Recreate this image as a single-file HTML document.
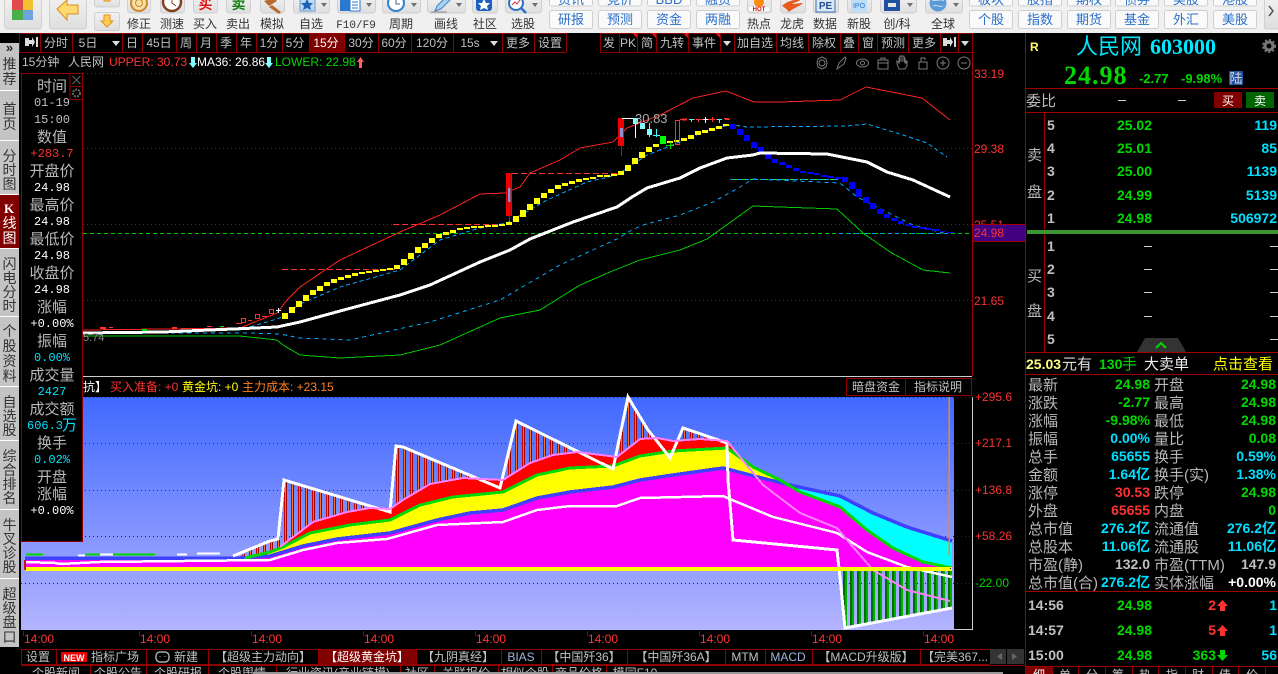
<!DOCTYPE html>
<html><head><meta charset="utf-8"><title>人民网 603000</title>
<style>
html,body{margin:0;padding:0;background:#000;width:1278px;height:674px;overflow:hidden}
svg{display:block}
text{font-family:"Liberation Sans","Noto Sans CJK SC",sans-serif;font-size:12px;fill:#c0c0c0}
.m text,text.m{font-family:"Liberation Mono","Noto Sans CJK SC",monospace}
.l text{font-size:15px;fill:#b8b8b8}
.b text,text.b{font-weight:bold;font-size:14px}
.e{text-anchor:end}.c{text-anchor:middle}
.k{fill:#333}.bl text{fill:#2a6fc8;font-size:13px;text-anchor:middle}
.tab text{text-anchor:middle}
.gr{fill:#00d800}.cy{fill:#00e0ff}.rd{fill:#ff3232}.wh{fill:#fff}.ye{fill:#ff0}
.ln{fill:none;shape-rendering:crispEdges}
</style></head><body>
<svg xmlns="http://www.w3.org/2000/svg" width="1278" height="674" viewBox="0 0 1278 674">
<defs>
<linearGradient id="bg" x1="0" y1="0" x2="0" y2="1"><stop offset="0" stop-color="#4069ff"/><stop offset="1" stop-color="#b4b4ff"/></linearGradient>
<linearGradient id="btn" x1="0" y1="0" x2="0" y2="1"><stop offset="0" stop-color="#f2f2f2"/><stop offset="1" stop-color="#dedede"/></linearGradient>
<pattern id="sr" width="7" height="10" patternUnits="userSpaceOnUse" x="0"><rect x="4" width="1" height="10" fill="#d00000"/><rect x="5" width="1" height="10" fill="#ff7020"/><rect x="6" width="1" height="10" fill="#a00000"/></pattern>
<pattern id="sg" width="7" height="10" patternUnits="userSpaceOnUse" x="3"><rect x="0" width="2" height="10" fill="#007000"/><rect x="2" width="2" height="10" fill="#00b000"/></pattern>
</defs>
<!-- toolbar -->
<rect width="1278" height="33" fill="#f0f0f0"/>
<g fill="url(#btn)" stroke="#d0d0d0">
<rect x="4.500" y="-5" width="37" height="34" rx="3"/><rect x="49.500" y="-5" width="37" height="34" rx="3"/>
<rect x="94.500" y="-5" width="25" height="12" rx="2"/><rect x="94.500" y="12.500" width="25" height="18" rx="2"/>
<rect x="127.500" y="-5" width="23" height="18" rx="3"/><rect x="160.500" y="-5" width="24" height="18" rx="3"/><rect x="193.500" y="-5" width="24" height="18" rx="3"/><rect x="226.500" y="-5" width="24" height="18" rx="3"/><rect x="260.500" y="-5" width="24" height="18" rx="3"/>
<rect x="293.500" y="-5" width="36" height="18" rx="3"/><rect x="337.500" y="-5" width="38" height="18" rx="3"/><rect x="382.500" y="-5" width="38" height="18" rx="3"/><rect x="427.500" y="-5" width="38" height="18" rx="3"/><rect x="472.500" y="-5" width="25" height="18" rx="3"/><rect x="505.500" y="-5" width="36" height="18" rx="3"/>
<rect x="747.500" y="-5" width="24" height="18" rx="3"/><rect x="780.500" y="-5" width="25" height="18" rx="3"/><rect x="813.500" y="-5" width="25" height="18" rx="3"/><rect x="847.500" y="-5" width="24" height="18" rx="3"/><rect x="880.500" y="-5" width="36" height="18" rx="3"/><rect x="925.500" y="-5" width="37" height="18" rx="3"/>
<rect x="1264.500" y="-5" width="20" height="34" rx="2"/>
</g>
<g fill="#707070"><path d="M321 3h6l-3 4zM366 3h6l-3 4zM411 3h6l-3 4zM456 3h6l-3 4zM532 3h6l-3 4zM907 3h6l-3 4zM953 3h6l-3 4z"/></g>
<path d="M1269 6l4 5-4 5" fill="none" stroke="#555" stroke-width="1.500"/>
<!-- logo -->
<rect x="12" y="-1" width="11" height="11" fill="#e04a4a"/><rect x="23" y="-1" width="10" height="11" fill="#f2c230"/><rect x="12" y="10" width="11" height="10" fill="#48b048"/><rect x="23" y="10" width="10" height="10" fill="#6ea4e0"/>
<path d="M57 9l10-9v5h11v9h-11v6z" fill="#ffd870" stroke="#d89020"/>
<path d="M104 -2h6v3h-6z" fill="#ffd050" stroke="#e09020"/>
<path d="M104 15h6v6h3l-6 6-6-6h3z" fill="#ffd050" stroke="#e09020"/>
<circle cx="139" cy="3" r="8" fill="#f8e0a0" stroke="#c88830" stroke-width="2"/><circle cx="139" cy="3" r="3.500" fill="none" stroke="#c88830"/>
<circle cx="172" cy="2" r="9" fill="#fff" stroke="#804020" stroke-width="2.500"/><path d="M172 -2v5l4 3" fill="none" stroke="#804020"/>
<text x="205.500" y="9" class="c" style="fill:#e01010;font-size:14px;font-weight:bold">买</text>
<text x="238.500" y="9" class="c" style="fill:#108010;font-size:14px;font-weight:bold">卖</text>
<path d="M264 1l10-3 3 3-8 5zM272 5l9 7-2 2-10-7z" fill="#b86a30"/>
<rect x="300" y="-3" width="15" height="14" fill="#bcd8f4" stroke="#6a9ad0"/><path d="M307 -1l2 4h4l-3 3 1 4-4-2-4 2 1-4-3-3h4z" fill="#2060b0"/>
<rect x="340" y="-1" width="10" height="12" fill="#2a78d0"/><rect x="350" y="-1" width="10" height="12" fill="#fff" stroke="#2a78d0"/><path d="M352 2h6M352 5h6M352 8h6" stroke="#2a78d0"/>
<circle cx="396" cy="3" r="8" fill="#fff" stroke="#3080d0" stroke-width="2"/><path d="M396 -1v5h4" fill="none" stroke="#406080"/>
<path d="M435 11l2-5 9-9 4 3-9 9z" fill="#a8d0f0" stroke="#3a80c0"/><path d="M431 12h16" stroke="#888"/>
<rect x="476" y="-3" width="16" height="14" rx="3" fill="#2060c0"/><path d="M484 -1l2 4h4l-3 3 1 4-4-2-4 2 1-4-3-3h4z" fill="#fff"/>
<circle cx="516" cy="3" r="7" fill="#fff" stroke="#2a70c8" stroke-width="2"/><path d="M512 5l3-3 2 2 3-4" fill="none" stroke="#e03030"/><path d="M521 8l5 5" stroke="#2a70c8" stroke-width="2.500"/>
<circle cx="759" cy="2" r="5" fill="#ff8a10"/><rect x="749" y="7" width="20" height="4" fill="#fff"/><text x="759" y="11" class="c" style="font-size:6px;font-weight:bold;fill:#d01010">HOT</text>
<path d="M782 6c6-6 14-6 20-8-2 4-8 4-10 6 4 0 8-1 11-1-4 4-10 5-14 9-2-3-5-5-7-6z" fill="#e85a20"/>
<rect x="816" y="-2" width="19" height="14" fill="#dce8f8" stroke="#406fa8"/><text x="825.500" y="9" class="c" style="font-size:10px;font-weight:bold;fill:#204f90">PE</text>
<rect x="851" y="-2" width="16" height="14" fill="#bcdcf8"/><text x="859" y="8" class="c" style="font-size:7px;fill:#2a78d0">IPO</text>
<path d="M884 -1h16v12h-16zM888 3h8v4h-8z" fill="#2050a0" fill-rule="evenodd"/>
<circle cx="938" cy="3" r="8.500" fill="#5a9ad8"/><path d="M932 0c4 2 8-2 12 1M933 6c4-2 7 2 10 0" fill="none" stroke="#c0dcf4"/>
<g fill="#fafafa" stroke="#cfcfcf">
<rect x="549.500" y="-8" width="43" height="14" rx="2"/><rect x="598.500" y="-8" width="43" height="14" rx="2"/><rect x="647.500" y="-8" width="43" height="14" rx="2"/><rect x="696.500" y="-8" width="43" height="14" rx="2"/>
<rect x="969.500" y="-8" width="43" height="14" rx="2"/><rect x="1018.500" y="-8" width="43" height="14" rx="2"/><rect x="1067.500" y="-8" width="43" height="14" rx="2"/><rect x="1115.500" y="-8" width="43" height="14" rx="2"/><rect x="1164.500" y="-8" width="43" height="14" rx="2"/><rect x="1213.500" y="-8" width="43" height="14" rx="2"/>
<rect x="549.500" y="10.500" width="43" height="18" rx="2"/><rect x="598.500" y="10.500" width="43" height="18" rx="2"/><rect x="647.500" y="10.500" width="43" height="18" rx="2"/><rect x="696.500" y="10.500" width="43" height="18" rx="2"/>
<rect x="969.500" y="10.500" width="43" height="18" rx="2"/><rect x="1018.500" y="10.500" width="43" height="18" rx="2"/><rect x="1067.500" y="10.500" width="43" height="18" rx="2"/><rect x="1115.500" y="10.500" width="43" height="18" rx="2"/><rect x="1164.500" y="10.500" width="43" height="18" rx="2"/><rect x="1213.500" y="10.500" width="43" height="18" rx="2"/>
</g>
<g class="bl">
<text x="571" y="4">资讯</text><text x="620" y="4">竞价</text><text x="669" y="4">BBD</text><text x="718" y="4">融资</text><text x="991" y="4">板块</text><text x="1040" y="4">股指</text><text x="1089" y="4">期权</text><text x="1137" y="4">债券</text><text x="1186" y="4">美股</text><text x="1235" y="4">港股</text>
<text x="571" y="24">研报</text><text x="620" y="24">预测</text><text x="669" y="24">资金</text><text x="718" y="24">两融</text><text x="991" y="24">个股</text><text x="1040" y="24">指数</text><text x="1089" y="24">期货</text><text x="1137" y="24">基金</text><text x="1186" y="24">外汇</text><text x="1235" y="24">美股</text>
</g>
<g class="lab">
<text x="139" y="28" class="c k">修正</text><text x="172" y="28" class="c k">测速</text><text x="205" y="28" class="c k">买入</text><text x="238" y="28" class="c k">卖出</text><text x="272" y="28" class="c k">模拟</text><text x="311" y="28" class="c k">自选</text><text x="356" y="28" class="c k" style="font-family:'Liberation Mono';font-size:11px">F10/F9</text><text x="401" y="28" class="c k">周期</text><text x="446" y="28" class="c k">画线</text><text x="485" y="28" class="c k">社区</text><text x="523" y="28" class="c k">选股</text>
<text x="759" y="28" class="c k">热点</text><text x="792" y="28" class="c k">龙虎</text><text x="825" y="28" class="c k">数据</text><text x="859" y="28" class="c k">新股</text><text x="897" y="28" class="c k">创/科</text><text x="943" y="28" class="c k">全球</text>
</g>
<!-- left sidebar -->
<rect x="0" y="43" width="19" height="604" fill="#c4c4c4"/>
<rect x="0" y="195" width="19" height="54" fill="#800000"/>
<path d="M0 90.500h19M0 140.500h19M0 194.500h19M0 248.500h19M0 316.500h19M0 386.500h19M0 440.500h19M0 509.500h19M0 578.500h19" stroke="#fff" fill="none"/>
<g style="text-anchor:middle">
<text x="9.500" y="52" style="fill:#222;font-size:13px;font-weight:bold;text-anchor:middle">»</text>
<g id="sb" fill="#222">
<text x="9.500" y="69" class="c k" style="font-size:14px">推</text><text x="9.500" y="84" class="c k" style="font-size:14px">荐</text>
<text x="9.500" y="114" class="c k" style="font-size:14px">首</text><text x="9.500" y="129" class="c k" style="font-size:14px">页</text>
<text x="9.500" y="161" class="c k" style="font-size:14px">分</text><text x="9.500" y="175" class="c k" style="font-size:14px">时</text><text x="9.500" y="189" class="c k" style="font-size:14px">图</text>
<text x="9" y="213" class="c wh" style="font-family:'Liberation Serif';font-weight:bold;font-size:13px">K</text><text x="9.500" y="228" class="c wh" style="font-size:14px">线</text><text x="9.500" y="243" class="c wh" style="font-size:14px">图</text>
<text x="9.500" y="269" class="c k" style="font-size:14px">闪</text><text x="9.500" y="283" class="c k" style="font-size:14px">电</text><text x="9.500" y="297" class="c k" style="font-size:14px">分</text><text x="9.500" y="311" class="c k" style="font-size:14px">时</text>
<text x="9.500" y="336" class="c k" style="font-size:14px">个</text><text x="9.500" y="351" class="c k" style="font-size:14px">股</text><text x="9.500" y="366" class="c k" style="font-size:14px">资</text><text x="9.500" y="381" class="c k" style="font-size:14px">料</text>
<text x="9.500" y="407" class="c k" style="font-size:14px">自</text><text x="9.500" y="421" class="c k" style="font-size:14px">选</text><text x="9.500" y="435" class="c k" style="font-size:14px">股</text>
<text x="9.500" y="461" class="c k" style="font-size:14px">综</text><text x="9.500" y="475" class="c k" style="font-size:14px">合</text><text x="9.500" y="489" class="c k" style="font-size:14px">排</text><text x="9.500" y="503" class="c k" style="font-size:14px">名</text>
<text x="9.500" y="530" class="c k" style="font-size:14px">牛</text><text x="9.500" y="544" class="c k" style="font-size:14px">叉</text><text x="9.500" y="558" class="c k" style="font-size:14px">诊</text><text x="9.500" y="572" class="c k" style="font-size:14px">股</text>
<text x="9.500" y="599" class="c k" style="font-size:14px">超</text><text x="9.500" y="613" class="c k" style="font-size:14px">级</text><text x="9.500" y="627" class="c k" style="font-size:14px">盘</text><text x="9.500" y="642" class="c k" style="font-size:14px">口</text>
</g></g>
<!-- tab row -->
<rect x="309" y="33" width="35" height="19" fill="#800000"/>
<path class="ln" stroke="#900000" d="M19.500 33v19M40.500 33v19M72.500 33v19M122.500 33v19M142.500 33v19M176.500 33v19M196.500 33v19M216.500 33v19M236.500 33v19M256.500 33v19M282.500 33v19M309.500 33v19M344.500 33v19M378.500 33v19M411.500 33v19M453.500 33v19M502.500 33v19M534.500 33v19M566.500 33v19M600.500 33v19M619.500 33v19M637.500 33v19M656.500 33v19M688.500 33v19M720.500 33v19M734.500 33v19M776.500 33v19M808.500 33v19M840.500 33v19M858.500 33v19M877.500 33v19M908.500 33v19M940.500 33v19M958.500 33v19M972.500 33v19M19 33.500h547M600 33.500h372M19 52.500h547M600 52.500h372"/>
<path d="M632 33h5v5zM651 33h5v5zM683 33h5v5zM715 33h5v5zM88 33l0 0" fill="#e01010"/>
<g class="tab">
<path d="M25 38h4v2h3v-3l3 5-3 5v-3h-3v2h-4zM36 37h2v10h-2z" fill="#ddd"/>
<text x="56" y="47">分时</text><text x="88" y="47">5日</text><path d="M112 41h8l-4 5z" fill="#ddd"/><text x="132" y="47">日</text><text x="159" y="47">45日</text><text x="186" y="47">周</text><text x="206" y="47">月</text><text x="226" y="47">季</text><text x="246" y="47">年</text><text x="269" y="47">1分</text><text x="295" y="47">5分</text><text x="326" y="47" class="wh">15分</text><text x="361" y="47">30分</text><text x="394" y="47">60分</text><text x="432" y="47">120分</text><text x="470" y="47">15s</text><path d="M490 41h8l-4 5z" fill="#ddd"/><text x="518" y="47">更多</text><text x="550" y="47">设置</text>
<text x="609" y="47">发</text><text x="628" y="47">PK</text><text x="647" y="47">简</text><text x="672" y="47">九转</text><text x="704" y="47">事件</text><path d="M723 41h8l-4 5z" fill="#ddd"/><text x="755" y="47">加自选</text><text x="792" y="47">均线</text><text x="824" y="47">除权</text><text x="849" y="47">叠</text><text x="868" y="47">窗</text><text x="893" y="47">预测</text><text x="924" y="47">更多</text>
<path d="M943 38h4v2h3v-3l3 5-3 5v-3h-3v2h-4zM954 37h2v10h-2z" fill="#ddd" transform="translate(0,0)"/><path d="M961 41h8l-4 5z" fill="#ddd"/>
</g>
<!-- info row -->
<text x="22" y="66">15分钟</text><text x="68" y="66">人民网</text>
<text x="109" y="66" class="rd">UPPER: 30.73</text><path d="M191 57h4v6h2l-4 5-4-5h2z" fill="#80ffff"/>
<text x="197" y="66" class="wh">MA36: 26.86</text><path d="M267 57h4v6h2l-4 5-4-5h2z" fill="#80ffff"/>
<text x="275" y="66" class="gr">LOWER: 22.98</text><path d="M359 68h3v-6h2l-3.500-5-3.500 5h2z" fill="#ff6060"/>
<!-- toolbox icons -->
<g fill="none" stroke="#7a7a7a">
<circle cx="822" cy="63" r="3"/><path d="M822 57l4 2 1 4-1 4-4 2-4-2-1-4 1-4z"/>
<path d="M837 69l2-6 6-6 1 1-2 6z"/>
<ellipse cx="862.500" cy="63" rx="6" ry="4"/><circle cx="862.500" cy="63" r="2"/>
<path d="M878 60h10v9h-10zM878 63h10M881 60v-2h4v2"/>
<path d="M899 69l-2-5v-3l2 2v-5h1v4-6h2v6-6h2v6-4h1v5h1v-2h1v5l-2 3z"/>
<path d="M919 62h8v7h-8zM921 62v-4h4v2"/>
<circle cx="943" cy="63" r="6"/><path d="M940 63h6M943 60v6"/>
<circle cx="964" cy="63" r="6"/><path d="M961 63h6"/>
</g>
<!-- main chart grid -->
<path class="ln" stroke="#b00000" stroke-dasharray="1 3" d="M83 73.500h889M83 148.500h889M83 224.500h889M83 300.500h889"/>
<path class="ln" stroke="#00c800" stroke-dasharray="4 3" d="M83 233.500h889"/>
<path class="ln" stroke="#a00000" d="M972.500 52v324M1025.500 33v641"/>
<!-- red dashed pivots -->
<path class="ln" stroke="#ff3030" stroke-dasharray="6 3" d="M282 269.500h113M393 224.500h112M512 173.500h105M680 119.500h50"/>
<path class="ln" stroke="#30e030" stroke-dasharray="8 2" d="M730 179.500h110"/>
<path class="ln" stroke="#00a0ff" stroke-dasharray="3 5" d="M730 179.500h110M840 233.500h110"/>
<!-- Main lines -->
<polyline class="ln" stroke="#ff2020" points="83,330 240,328 277,313 287,300 300,287 340,260 400,232 440,215 480,194 505,193 520,187 530,173 560,160 580,148 613,142 627,128 660,115 693,98 726,91 754,102 780,102 840,100 866,87 922,98 950,120"/>
<polyline class="ln" stroke="#00a8ff" stroke-dasharray="4 3" points="83,332 240,330 280,318 300,304 340,287 400,270 440,240 480,228 507,223 547,200 587,182 617,175 647,155 680,142 713,128 733,125 747,127 847,126 867,124 900,134 927,143 947,157"/>
<polyline class="ln" stroke="#00a8ff" stroke-dasharray="4 4" points="83,333 250,333 280,334 300,338 350,340 430,322 500,300 560,265 617,239 630,231 643,225 680,215 713,202 740,187 753,179 840,183 857,197 887,212 913,225 947,234"/>
<polyline class="ln" stroke="#00c800" points="83,336 240,336 277,340 283,345 300,355 340,358 400,355 440,345 500,318 540,310 580,285 610,272 640,260 680,250 707,239 753,206 780,207 837,209 863,233 890,252 923,270 950,273"/>
<!-- yellow sar -->
<path fill="#ff0" d="M282 313h6v6h-6zM289 307h6v6h-6zM296 301h6v6h-6zM303 295h6v6h-6zM310 290h6v5h-6zM317 286h6v5h-6zM324 282h6v4h-6zM331 279h6v4h-6zM338 277h6v3h-6zM345 275h6v3h-6zM352 273h6v3h-6zM359 272h6v2h-6zM366 271h6v2h-6zM373 270h6v2h-6zM380 269h6v2h-6zM387 268h6v2h-6zM394 265h6v4h-6zM401 259h6v6h-6zM408 253h6v6h-6zM415 247h6v6h-6zM422 243h6v5h-6zM429 238h6v5h-6zM436 234h6v4h-6zM443 232h6v3h-6zM450 230h6v3h-6zM457 228h6v2h-6zM464 227h6v2h-6zM471 226h6v2h-6zM478 226h6v2h-6zM485 225h6v2h-6zM492 225h6v2h-6zM499 224h6v2h-6zM506 222h6v3h-6zM513 216h6v6h-6zM520 210h6v7h-6zM527 204h6v6h-6zM534 198h6v6h-6zM541 193h6v5h-6zM548 189h6v4h-6zM555 185h6v4h-6zM562 183h6v3h-6zM569 181h6v3h-6zM576 179h6v3h-6zM583 178h6v2h-6zM590 177h6v2h-6zM597 175h6v2h-6zM604 175h6v2h-6zM611 174h6v2h-6zM618 171h6v4h-6zM625 165h6v6h-6zM632 158h6v6h-6zM639 152h6v6h-6zM646 147h6v5h-6zM653 144h6v3h-6zM660 142h6v2h-6zM667 141h6v2h-6zM674 140h6v2h-6zM681 138h6v3h-6zM688 135h6v4h-6zM695 131h6v4h-6zM702 130h6v3h-6zM709 128h6v3h-6zM716 126h6v3h-6zM723 124h6v2h-6z"/>
<!-- blue sar -->
<path fill="#0000ff" d="M730 124h6v5h-6zM737 129h6v6h-6zM744 135h6v6h-6zM751 142h6v6h-6zM758 147h6v5h-6zM765 154h6v5h-6zM772 159h6v4h-6zM779 162h6v3h-6zM786 165h6v3h-6zM793 168h6v3h-6zM800 171h6v2h-6zM807 172h6v2h-6zM814 173h6v2h-6zM821 175h6v2h-6zM828 176h6v2h-6zM835 177h6v2h-6zM842 177h6v5h-6zM849 182h6v7h-6zM856 189h6v8h-6zM863 197h6v6h-6zM870 203h6v6h-6zM877 209h6v5h-6zM884 214h6v4h-6zM891 218h6v3h-6zM898 221h6v3h-6zM905 224h6v2h-6zM912 226h6v2h-6zM919 227h6v2h-6zM926 228h6v2h-6zM933 229h6v2h-6zM940 231h6v1h-6zM947 232h6v1h-6z"/>
<polyline class="ln" stroke="#fff" stroke-width="3" points="83,333 163,332 233,329 277,327 300,322 340,311 400,295 430,285 480,262 510,250 530,239 573,222 617,207 632,197 647,188 680,178 700,168 727,158 753,155 760,153 827,154 867,162 887,172 913,180 950,197"/>
<!-- small candles left -->
<path fill="#ff3030" d="M100 327h6v2h-6zM109 327h4v1h-4zM172 327h5v2h-5zM207 326h5v1h-5zM236 323h6v1h-6zM248 320h4v1h-4zM262 316h5v1h-5z"/>
<path fill="none" stroke="#ff3030" d="M241.500 318.500h4v4h-4zM255.500 314.500h4v4h-4zM269.500 309.500h4v4h-4z"/>
<path fill="#00e000" d="M142 329h5v2h-5zM220 326h4v1h-4z"/><path stroke="#fff" d="M276 310.500h5M278.500 308v5" fill="none"/>
<text x="83" y="341" style="fill:#888;font-size:11px">5.74</text>
<!-- big candles -->
<rect x="506" y="173" width="6" height="43" fill="#f00000"/><rect x="508" y="188" width="3" height="14" fill="#9090d0"/><path d="M509.500 216v5" stroke="#e00000" fill="none"/>
<path d="M507.500 173v43M510.500 173v43" stroke="#a00000" stroke-width=".5"/>
<rect x="618" y="118" width="6" height="28" fill="#f00000"/><rect x="620" y="128" width="3" height="9" fill="#9090d0"/><path d="M621.500 146v10" stroke="#e00000" fill="none"/>
<path d="M622 118.500h13M635.500 118v20M649.500 123v14M656.500 129v8M653 135.500h7M670.500 142v7M666 145.500h8" class="ln" stroke="#fff"/>
<path d="M649.500 123v14M656.500 129v8M653 135.500h7" class="ln" stroke="#40ffff"/><path d="M670.500 142v7M666 145.500h8" class="ln" stroke="#00e000"/>
<rect x="633" y="118" width="5" height="6" fill="#80ffff"/><rect x="640" y="123" width="5" height="6" fill="#80ffff"/><rect x="647" y="129" width="5" height="6" fill="#80ffff"/><rect x="660" y="136" width="6" height="8" fill="#00ff00"/>
<rect x="675.500" y="120.500" width="4" height="24" fill="none" stroke="#ff3030"/>
<path class="ln" d="M682 119.500h5" stroke="#ff3030" stroke-width="2"/><path class="ln" d="M689 119.500h5M691.500 119v3" stroke="#40ffff"/><path class="ln" d="M696 119.500h5M698.500 119v3" stroke="#ff3030"/><path class="ln" d="M703 119.500h5M705.500 117v6" stroke="#fff"/><path class="ln" d="M710 119.500h5M712.500 117v5" stroke="#ff3030"/><path class="ln" d="M717 119.500h5M719.500 119v4" stroke="#40ffff"/><path class="ln" d="M724 118.500h5" stroke="#ff3030"/>
<text x="635" y="123" style="font-size:13px;fill:#aaa">30.83</text>
<!-- axis labels -->
<g class="rd"><text x="974" y="78" class="rd">33.19</text><text x="974" y="153" class="rd">29.38</text><text x="974" y="229" class="rd">25.51</text><text x="974" y="305" class="rd">21.65</text></g>
<rect x="973" y="225" width="52" height="16" fill="#400080"/><path d="M973 224.500h52M973 241.500h52" stroke="#a00000"/>
<text x="974" y="237" class="rd">24.98</text>
<!-- lower chart header -->
<path d="M83 376.500h889" stroke="#ccc" fill="none"/>
<text x="83" y="391" class="wh">抗】</text>
<text x="110" y="391" class="rd">买入准备: +0</text><text x="182" y="391" class="ye">黄金坑: +0</text><text x="242" y="391" style="fill:#ff8020">主力成本: +23.15</text>
<rect x="846.500" y="378.500" width="59" height="17" fill="none" stroke="#900000"/><rect x="905.500" y="378.500" width="66" height="17" fill="none" stroke="#900000"/>
<text x="876" y="391" class="c">暗盘资金</text><text x="938" y="391" class="c">指标说明</text>
<!-- lower chart -->
<rect x="21" y="397" width="933" height="233" fill="url(#bg)"/>
<path class="ln" stroke="#900000" stroke-dasharray="1 3" d="M21 397.500h951M21 443.500h951M21 490.500h951M21 536.500h951M21 583.500h951"/>
<path class="ln" stroke="#ccc" d="M954 629.500h18.500V397"/>
<polygon fill="url(#sr)" points="240,556 270,541 278,539 284,480 370,506 390,512 396,446 403,447 500,488 516,421 613,469 628,397 637,412 648,430 660,445 670,458 683,428 695,432 727,443 727,567 240,567"/>
<polygon fill="#ff0000" points="280,547 313,522 347,512 370,508 390,509 403,500 430,484 463,478 503,480 530,463 553,455 577,452 617,457 640,439 657,438 673,441 700,439 727,441 740,457 755,470 755,567 280,567"/>
<polygon fill="#ffff00" points="245,558 270,552 283,547 310,533 350,525 390,520 420,505 453,497 503,492 537,475 570,468 613,466 640,456 673,451 727,448 753,467 780,480 800,492 800,567 245,567"/>
<polygon fill="#00ffff" points="785,483 790,485 840,496 873,513 907,527 952,541 952,568 785,568"/>
<polygon fill="#ff00ff" points="25,559 240,559 270,556 280,553 303,546 337,539 390,533 437,520 470,513 503,510 537,498 570,492 613,487 640,480 673,475 723,468 750,475 790,485 800,492 840,507 867,530 893,548 923,562 952,568 952,568 25,568"/>
<polygon fill="url(#sg)" points="840,571 845,628 952,608 952,571"/>
<polyline class="ln" stroke="#4040ff" stroke-width="3.500" points="25,558 240,558 270,556 280,553 303,546 337,539 390,533 437,520 470,513 503,510 537,498 570,492 613,487 640,480 673,475 723,468 750,475 790,485 840,496 873,513 907,527 952,541"/>
<polyline class="ln" stroke="#00d800" stroke-width="3" points="245,558 270,552 283,547 310,533 350,525 390,520 420,505 453,497 503,492 537,475 570,468 613,466 640,456 673,451 727,448 753,467 780,480 800,492 840,507 867,530 893,548 923,562 952,568"/>
<path class="ln" stroke="#00d800" stroke-width="2" d="M26 554.500h17M85 554.500h70" fill="none"/>
<path class="ln" stroke="#fff" stroke-width="2" d="M78 555.500h7M100 554.500h13M177 554.500h10M197 553.500h23" fill="none"/>
<polyline class="ln" stroke="#fff" stroke-width="2.500" points="25,562 55,563 60,564 100,562 270,560 303,550 337,543 387,539 437,525 503,522 537,510 570,506 617,506 640,498 723,496 737,502 773,517 837,533 867,552 907,567 952,577"/>
<polyline class="ln" stroke="#fff" stroke-width="3" points="233,556 270,541 278,539 284,480 370,506 390,512 396,446 403,447 500,488 516,421 613,469 628,397 637,412 648,430 660,445 670,458 683,428 695,432 727,443 728,480 733,540 837,550 840,577 845,628 952,608"/>
<polyline class="ln" stroke="#ff80ff" stroke-width="2" points="280,547 313,522 347,512 370,508 390,509 403,500 430,484 463,478 503,480 530,463 553,455 577,452 617,457 640,439 657,438 673,441 700,439 727,441 740,457 763,485 800,513 837,528 847,540 873,570 907,590 950,601"/>
<rect x="25" y="567" width="927" height="4" fill="#ffff00"/>
<rect x="950" y="568" width="1" height="1" fill="#000"/>
<rect x="24" y="560" width="2" height="10" fill="#d01010"/>
<rect x="948.500" y="397" width="1.500" height="158" fill="#ff8020"/>
<text x="975" y="401" class="rd">+295.6</text><text x="975" y="447" class="rd">+217.1</text><text x="975" y="494" class="rd">+136.8</text><text x="975" y="540" class="rd">+58.26</text><text x="975" y="587" class="gr">-22.00</text>
<path stroke="#a00000" d="M23.500 631v5M139.500 631v5M251.500 631v5M363.500 631v5M475.500 631v5M587.500 631v5M699.500 631v5M811.500 631v5M923.500 631v5" fill="none"/>
<g class="rd"><text x="24" y="643" class="rd">14:00</text><text x="140" y="643" class="rd">14:00</text><text x="252" y="643" class="rd">14:00</text><text x="364" y="643" class="rd">14:00</text><text x="476" y="643" class="rd">14:00</text><text x="588" y="643" class="rd">14:00</text><text x="700" y="643" class="rd">14:00</text><text x="812" y="643" class="rd">14:00</text><text x="924" y="643" class="rd">14:00</text></g>
<!-- left info panel -->
<rect x="21.500" y="73.500" width="61" height="468" fill="#000" stroke="#900000"/>
<rect x="70" y="73.500" width="12.500" height="13" fill="#000" stroke="#900000"/><rect x="70" y="86.500" width="12.500" height="13" fill="#000" stroke="#900000"/>
<path d="M72.500 76l8 8M80.500 76l-8 8" stroke="#666" fill="none"/><circle cx="76.500" cy="93" r="3.500" fill="none" stroke="#666" stroke-width="2" stroke-dasharray="2 1"/>
<g class="l" style="text-anchor:middle">
<text x="52" y="91" class="c">时间</text><text x="52" y="142" class="c">数值</text><text x="52" y="176" class="c">开盘价</text><text x="52" y="210" class="c">最高价</text><text x="52" y="244" class="c">最低价</text><text x="52" y="278" class="c">收盘价</text><text x="52" y="312" class="c">涨幅</text><text x="52" y="346" class="c">振幅</text><text x="52" y="380" class="c">成交量</text><text x="52" y="414" class="c">成交额</text><text x="52" y="448" class="c">换手</text><text x="52" y="482" class="c">开盘</text><text x="52" y="499" class="c">涨幅</text>
</g>
<g class="m">
<text x="52" y="106" class="c">01-19</text><text x="52" y="123" class="c">15:00</text><text x="52" y="157" class="c rd">+283.7</text>
<text x="52" y="191" class="c wh">24.98</text><text x="52" y="225" class="c wh">24.98</text><text x="52" y="259" class="c wh">24.98</text><text x="52" y="293" class="c wh">24.98</text><text x="52" y="327" class="c wh">+0.00%</text><text x="52" y="361" class="c cy">0.00%</text><text x="52" y="395" class="c cy">2427</text><text x="27" y="429" class="cy">606.3</text><text x="62" y="430" class="cy" style="font-size:15px">万</text><text x="52" y="463" class="c cy">0.02%</text><text x="52" y="514" class="c wh">+0.00%</text>
</g>
<!-- bottom tabs -->
<rect x="318" y="649" width="98" height="15" fill="#800000"/>
<path class="ln" stroke="#900000" d="M21 649.500h969M21 664.500h969M21.500 649v15M56.500 649v15M146.500 649v15M208.500 649v15M318.500 649v15M416.500 649v15M501.500 649v15M541.500 649v15M627.500 649v15M725.500 649v15M765.500 649v15M812.500 649v15M920.500 649v15M990.500 649v15"/>
<rect x="61" y="652" width="26" height="10" rx="1" fill="#f00000"/><text x="74" y="661" class="c wh" style="font-size:9px;font-weight:bold">NEW</text>
<rect x="156" y="652" width="13" height="10" rx="4" fill="none" stroke="#aaa" stroke-width="1.500"/><path d="M160 656v1M165 656v1" stroke="#aaa"/>
<text x="38" y="661" class="c">设置</text><text x="115" y="661" class="c">指标广场</text><text x="186" y="661" class="c">新建</text><text x="263" y="661" class="c">【超级主力动向】</text><text x="367" y="661" class="c wh">【超级黄金坑】</text><text x="458" y="661" class="c">【九阴真经】</text><text x="521" y="661" class="c" style="fill:#a0b4d8">BIAS</text><text x="584" y="661" class="c">【中国歼36】</text><text x="676" y="661" class="c">【中国歼36A】</text><text x="745" y="661" class="c">MTM</text><text x="788" y="661" class="c" style="fill:#a0b4d8">MACD</text><text x="866" y="661" class="c">【MACD升级版】</text><text x="955" y="661" class="c">【完美367...</text>
<rect x="990" y="649" width="16" height="15" fill="#333"/><rect x="1007" y="649" width="17" height="15" fill="#333"/><path d="M1002 653v7l-5-3.500zM1012 653v7l5-3.500z" fill="#666"/>
<path class="ln" stroke="#900000" d="M21 665.500h1004M90.500 665v9M146.500 665v9M208.500 665v9M276.500 665v9M400.500 665v9M434.500 665v9M498.500 665v9M552.500 665v9M606.500 665v9"/>
<g><text x="56" y="677" class="c">个股新闻</text><text x="118" y="677" class="c">个股公告</text><text x="178" y="677" class="c">个股研报</text><text x="242" y="677" class="c">个股舆情</text><text x="338" y="677" class="c">行业资讯(产业链模)</text><text x="417" y="677" class="c">社区</text><text x="466" y="677" class="c">关联报价</text><text x="525" y="677" class="c">相似个股</text><text x="579" y="677" class="c">商品价格</text><text x="635" y="677" class="c">模同F10</text></g>
<rect x="253" y="672" width="750" height="2" fill="#999"/>
<!-- right panel -->
<path class="ln" stroke="#a00000" d="M1025 88.500h253M1025 112.500h253M1044.500 113v239M1025 352.500h253M1025 374.500h253M1025 591.500h253M1025 666.500h253"/>
<text x="1030" y="51" style="fill:#ffff60;font-weight:bold;font-size:12px">R</text>
<text x="1076" y="54" style="fill:#00e8ff;font-size:22px">人民网</text>
<text x="1150" y="54" style="fill:#00e8ff;font-size:22px;font-weight:bold;font-family:'Liberation Serif'">603000</text>
<circle cx="1269" cy="46" r="4" fill="none" stroke="#777" stroke-width="3"/><circle cx="1269" cy="46" r="6" fill="none" stroke="#777" stroke-width="2" stroke-dasharray="2 2"/>
<text x="1064" y="84" class="gr" style="font-size:26px;letter-spacing:1px;font-weight:bold;font-family:'Liberation Serif'">24.98</text>
<text x="1139" y="83" class="gr" style="font-size:13px;font-weight:bold">-2.77</text><text x="1181" y="83" class="gr" style="font-size:13px;font-weight:bold">-9.98%</text>
<rect x="1229" y="71" width="14" height="14" fill="#2050a0"/><text x="1236" y="83" class="c" style="font-size:13px;fill:#ddd">陆</text>
<text x="1026" y="106" style="font-size:15px;fill:#bbb">委比</text>
<path d="M1118 100.500h8M1178 100.500h8" stroke="#ccc" fill="none"/>
<rect x="1214" y="92" width="28" height="16" fill="#800000"/><rect x="1246" y="92" width="28" height="16" fill="#006400"/>
<text x="1228" y="105" class="c wh">买</text><text x="1260" y="105" class="c wh">卖</text>
<g class="l"><text x="1027" y="160">卖</text><text x="1027" y="197">盘</text><text x="1027" y="281">买</text><text x="1027" y="316">盘</text></g>
<g class="b">
<text x="1047" y="130">5</text><text x="1047" y="153">4</text><text x="1047" y="176">3</text><text x="1047" y="200">2</text><text x="1047" y="223">1</text>
<text x="1047" y="251">1</text><text x="1047" y="274">2</text><text x="1047" y="297">3</text><text x="1047" y="321">4</text><text x="1047" y="344">5</text>
<text x="1152" y="130" class="e gr">25.02</text><text x="1152" y="153" class="e gr">25.01</text><text x="1152" y="176" class="e gr">25.00</text><text x="1152" y="200" class="e gr">24.99</text><text x="1152" y="223" class="e gr">24.98</text>
<text x="1277" y="130" class="e cy">119</text><text x="1277" y="153" class="e cy">85</text><text x="1277" y="176" class="e cy">1139</text><text x="1277" y="200" class="e cy">5139</text><text x="1277" y="223" class="e cy">506972</text>
</g>
<rect x="1027" y="230" width="251" height="4" fill="#3c9632"/>
<path stroke="#ccc" fill="none" d="M1144 246.500h8M1270 246.500h8M1144 269.500h8M1270 269.500h8M1144 292.500h8M1270 292.500h8M1144 316.500h8M1270 316.500h8M1270 339.500h8"/>
<path d="M1137 352l8-14h33l8 14z" fill="#333"/><path d="M1156 348l5-5 5 5" fill="none" stroke="#00d800" stroke-width="2"/>
<text x="1026" y="369" class="b" style="fill:#ffff80;font-weight:bold;font-size:14px">25.03</text><text x="1062" y="369" style="font-size:15px;fill:#ddd">元有</text><text x="1099" y="369" class="gr" style="font-size:14px;font-weight:bold">130</text><text x="1122" y="369" class="gr" style="font-size:15px">手</text><text x="1144" y="369" style="font-size:15px;fill:#eee">大卖单</text><text x="1213" y="369" class="ye" style="font-size:15px">点击查看</text>
<g class="l">
<text x="1028" y="390">最新</text><text x="1028" y="408">涨跌</text><text x="1028" y="426">涨幅</text><text x="1028" y="444">振幅</text><text x="1028" y="462">总手</text><text x="1028" y="480">金额</text><text x="1028" y="498">涨停</text><text x="1028" y="516">外盘</text><text x="1028" y="534">总市值</text><text x="1028" y="552">总股本</text><text x="1028" y="570">市盈(静)</text><text x="1028" y="588">总市值(合)</text>
<text x="1154" y="390">开盘</text><text x="1154" y="408">最高</text><text x="1154" y="426">最低</text><text x="1154" y="444">量比</text><text x="1154" y="462">换手</text><text x="1154" y="480">换手(实)</text><text x="1154" y="498">跌停</text><text x="1154" y="516">内盘</text><text x="1154" y="534">流通值</text><text x="1154" y="552">流通股</text><text x="1154" y="570">市盈(TTM)</text><text x="1154" y="588">实体涨幅</text>
</g>
<g class="b">
<text x="1150" y="389" class="e gr">24.98</text><text x="1150" y="407" class="e gr">-2.77</text><text x="1150" y="425" class="e gr">-9.98%</text><text x="1150" y="443" class="e cy">0.00%</text><text x="1150" y="461" class="e cy">65655</text><text x="1150" y="479" class="e cy">1.64亿</text><text x="1150" y="497" class="e rd">30.53</text><text x="1150" y="515" class="e rd">65655</text><text x="1150" y="533" class="e cy">276.2亿</text><text x="1150" y="551" class="e cy">11.06亿</text><text x="1150" y="569" class="e">132.0</text><text x="1150" y="587" class="e cy">276.2亿</text>
<text x="1276" y="389" class="e gr">24.98</text><text x="1276" y="407" class="e gr">24.98</text><text x="1276" y="425" class="e gr">24.98</text><text x="1276" y="443" class="e gr">0.08</text><text x="1276" y="461" class="e cy">0.59%</text><text x="1276" y="479" class="e cy">1.38%</text><text x="1276" y="497" class="e gr">24.98</text><text x="1276" y="515" class="e gr">0</text><text x="1276" y="533" class="e cy">276.2亿</text><text x="1276" y="551" class="e cy">11.06亿</text><text x="1276" y="569" class="e">147.9</text><text x="1276" y="587" class="e wh">+0.00%</text>
<text x="1028" y="610">14:56</text><text x="1028" y="635">14:57</text><text x="1028" y="660">15:00</text>
<text x="1152" y="610" class="e gr">24.98</text><text x="1152" y="635" class="e gr">24.98</text><text x="1152" y="660" class="e gr">24.98</text>
<text x="1216" y="610" class="e rd">2</text><text x="1216" y="635" class="e rd">5</text><text x="1216" y="660" class="e gr">363</text>
<text x="1277" y="610" class="e cy">1</text><text x="1277" y="635" class="e cy">1</text><text x="1277" y="660" class="e cy">56</text>
</g>
<path d="M1222.500 600l5.500 6h-3v5h-5v-5h-3zM1222.500 625l5.500 6h-3v5h-5v-5h-3z" fill="#ff3232"/><path d="M1222.500 661l5.500-6h-3v-5h-5v5h-3z" fill="#00d800"/>
<rect x="1026" y="667" width="26" height="7" fill="#800000"/>
<path class="ln" stroke="#900000" d="M1052.500 667v7M1078.500 667v7M1105.500 667v7M1132.500 667v7M1158.500 667v7M1185.500 667v7M1212.500 667v7M1238.500 667v7M1265.500 667v7"/>
<g style="font-size:14px"><text x="1039" y="679" class="c wh">细</text><text x="1065" y="679" class="c">单</text><text x="1092" y="679" class="c">分</text><text x="1118" y="679" class="c">筹</text><text x="1145" y="679" class="c">热</text><text x="1172" y="679" class="c">指</text><text x="1198" y="679" class="c">财</text><text x="1225" y="679" class="c">债</text><text x="1252" y="679" class="c">价</text></g>
</svg>
</body></html>
